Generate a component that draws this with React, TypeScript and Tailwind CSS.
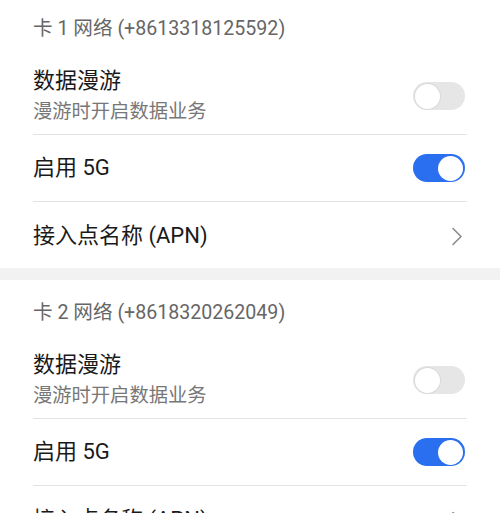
import React from 'react';

interface SimCard {
  label: string;
  phone: string;
  roaming: boolean;
  enable5g: boolean;
}

const cards: SimCard[] = [
  { label: '卡 1 网络', phone: '+8613318125592', roaming: false, enable5g: true },
  { label: '卡 2 网络', phone: '+8618320262049', roaming: false, enable5g: true },
];

function Toggle({ on }: { on: boolean }) {
  return (
    <div
      className={`mr-[2px] flex h-[28px] w-[52px] shrink-0 items-center rounded-full p-[2px] ${
        on ? 'justify-end bg-[#2a6ff0]' : 'justify-start bg-[#e6e6e6]'
      }`}
    >
      <span
        className={`h-[25px] w-[25px] rounded-full bg-white ${on ? '' : 'shadow-[0_0_0_1px_#d9d9d9]'}`}
      />
    </div>
  );
}

function Chevron() {
  return (
    <svg width="12" height="19" viewBox="0 0 12 19" fill="none" className="shrink-0 mr-[4px]">
      <polyline points="2,1.5 10,9.5 2,17.5" stroke="#8a8a8a" strokeWidth="1.6" strokeLinecap="round" strokeLinejoin="round" />
    </svg>
  );
}

function Divider() {
  return <div className="h-px bg-[#e3e3e3]" />;
}

function CardSection({ card }: { card: SimCard }) {
  return (
    <section className="bg-white px-[33px]">
      {/* section header */}
      <div className="pt-[20px] pb-[14px] text-[19.6px] leading-[26px] text-[#666666]">
        {card.label} ({card.phone})
      </div>

      {/* data roaming */}
      <div className="flex items-center justify-between pt-[11px] pb-[9px]">
        <div>
          <div className="text-[22px] leading-[28px] text-[#1a1a1a]">数据漫游</div>
          <div className="mt-1 text-[19.3px] leading-[26px] text-[#777777]">漫游时开启数据业务</div>
        </div>
        <Toggle on={card.roaming} />
      </div>
      <Divider />

      {/* 5G */}
      <div className="flex h-[66px] items-center justify-between">
        <span className="text-[22px] leading-[28px] text-[#1a1a1a]">启用 5G</span>
        <Toggle on={card.enable5g} />
      </div>
      <Divider />

      {/* APN */}
      <div className="flex h-[66px] items-center justify-between pt-[2px]">
        <span className="text-[22px] leading-[28px] text-[#1a1a1a]">接入点名称 (APN)</span>
        <Chevron />
      </div>
    </section>
  );
}

export default function App() {
  return (
    <div
      className="h-[513px] w-[500px] overflow-hidden bg-white"
      style={{ fontFamily: 'Roboto, "Noto Sans CJK SC", sans-serif' }}
    >
      <div className="-mt-1">
        {cards.map((card, i) => (
          <div key={card.phone}>
            {i > 0 && <div className="h-[12px] bg-[#f2f2f2]" />}
            <CardSection card={card} />
          </div>
        ))}
      </div>
    </div>
  );
}
